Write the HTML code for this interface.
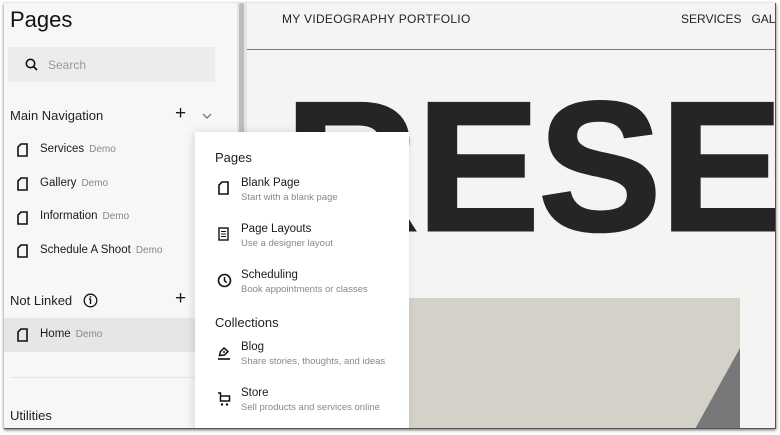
<!DOCTYPE html>
<html><head><meta charset="utf-8"><style>
*{box-sizing:border-box;margin:0;padding:0}
body{width:780px;height:435px;background:#fff;font-family:"Liberation Sans",Arial,sans-serif;position:relative;overflow:hidden;color:#1a1a1a}
.frame{position:absolute;left:4px;top:3px;width:772px;height:426px;overflow:hidden;background:#f4f4f2;box-shadow:0 1px 3px rgba(0,0,0,.6);border-right:1px solid #555;border-bottom:1px solid #555}
.side{position:absolute;left:0;top:0;width:233px;height:426px;background:#f7f7f7}
.scroll{position:absolute;left:233px;top:0;width:10px;height:426px;background:#e4e4e4}
.scroll i{position:absolute;left:2px;top:0;width:5px;height:426px;background:#bdbdbd;border-radius:2px}
.main{position:absolute;left:243px;top:0;right:0;height:426px;background:#f4f4f2}
.t{position:absolute;white-space:nowrap}
.demo{color:#888;font-size:10px;margin-left:5px}
.pi{position:absolute;width:11px;height:14px}
.pop{position:absolute;left:191px;top:129px;width:214px;height:300px;background:#fff;box-shadow:-2px 0 8px rgba(0,0,0,.12)}
.h{font-size:13px;color:#222}
.sub{font-size:9.5px;color:#888}
</style></head><body>
<div class="frame">
 <div class="side">
  <div class="t" style="left:6px;top:4px;font-size:22px;font-weight:500;color:#111">Pages</div>
  <div style="position:absolute;left:4px;top:44px;width:207px;height:35px;background:#ececec"></div>
  <svg class="t" style="left:21px;top:55px" width="13" height="13" viewBox="0 0 13 13"><circle cx="5.5" cy="5.5" r="4.2" fill="none" stroke="#111" stroke-width="1.6"/><path d="M8.6 8.6L12 12" stroke="#111" stroke-width="1.7"/></svg>
  <div class="t" style="left:44px;top:55px;font-size:12px;color:#999">Search</div>
  <div class="t" style="left:6px;top:105px;font-size:13px;color:#222">Main Navigation</div>
  <div class="t" style="left:171px;top:100px;font-size:19px;font-weight:300">+</div>
  <svg class="t" style="left:198px;top:110px" width="10" height="6"><path d="M1 1l4 4 4-4" fill="none" stroke="#666" stroke-width="1.2"/></svg>
  <div class="t" style="left:36px;top:140px;font-size:11.5px">Services<span class="demo">Demo</span></div>
  <div class="t" style="left:36px;top:174px;font-size:11.5px">Gallery<span class="demo">Demo</span></div>
  <div class="t" style="left:36px;top:207px;font-size:11.5px">Information<span class="demo">Demo</span></div>
  <div class="t" style="left:36px;top:241px;font-size:11.5px">Schedule A Shoot<span class="demo">Demo</span></div>
  <svg class="pi" style="left:13px;top:140px" viewBox="0 0 11 14"><path d="M4 1H10V13H1V4Z" fill="none" stroke="#111" stroke-width="1.6"/></svg>
  <svg class="pi" style="left:13px;top:174px" viewBox="0 0 11 14"><path d="M4 1H10V13H1V4Z" fill="none" stroke="#111" stroke-width="1.6"/></svg>
  <svg class="pi" style="left:13px;top:208px" viewBox="0 0 11 14"><path d="M4 1H10V13H1V4Z" fill="none" stroke="#111" stroke-width="1.6"/></svg>
  <svg class="pi" style="left:13px;top:241px" viewBox="0 0 11 14"><path d="M4 1H10V13H1V4Z" fill="none" stroke="#111" stroke-width="1.6"/></svg>
  <div class="t" style="left:6px;top:290px;font-size:13px;color:#222">Not Linked</div>
  <svg class="t" style="left:79px;top:290px" width="15" height="15"><circle cx="7.5" cy="7.5" r="6.3" fill="none" stroke="#111" stroke-width="1.3"/><path d="M7.5 6v5M6 6h1.5" stroke="#111" stroke-width="1.4"/><circle cx="7.5" cy="4" r=".9" fill="#111"/></svg>
  <div class="t" style="left:171px;top:285px;font-size:19px;font-weight:300">+</div>
  <div style="position:absolute;left:0;top:315px;width:233px;height:34px;background:#e6e6e6"></div>
  <svg class="pi" style="left:13px;top:325px" viewBox="0 0 11 14"><path d="M4 1H10V13H1V4Z" fill="none" stroke="#111" stroke-width="1.6"/></svg>
  <div class="t" style="left:36px;top:325px;font-size:11.5px">Home<span class="demo">Demo</span></div>
  <div style="position:absolute;left:6px;top:374px;width:227px;height:1px;background:#e5e5e5"></div>
  <div class="t" style="left:6px;top:405px;font-size:13px;color:#222">Utilities</div>
 </div>
 <div class="scroll"><i></i></div>
 <div class="main">
  <div class="t" style="left:35px;top:9px;font-size:12px;letter-spacing:.3px;color:#222">MY VIDEOGRAPHY PORTFOLIO</div>
  <div class="t" style="left:434px;top:9px;font-size:12px;color:#222">SERVICES&nbsp;&nbsp;&nbsp;GALL</div>
  <div style="position:absolute;left:0;top:46px;width:100%;height:1px;background:#777"></div>
  <div class="t" style="left:38px;top:71px;font-size:184px;font-weight:bold;color:#252527;letter-spacing:-1px;line-height:1;-webkit-text-stroke:3px #252527">RESE</div>
  <div style="position:absolute;left:158px;top:295px;width:335px;height:140px;background:#d4d1c9"></div>
  <svg class="t" style="left:158px;top:295px" width="335" height="140"><path d="M335 50L335 140L285 140Z" fill="#77787a"/></svg>
 </div>
 <div class="pop">
  <div class="t h" style="left:20px;top:18px">Pages</div>
  <svg class="pi" style="left:23px;top:49px" viewBox="0 0 11 14"><path d="M4 1H10V13H1V4Z" fill="none" stroke="#111" stroke-width="1.6"/></svg>
  <div class="t" style="left:46px;top:45px;font-size:11.5px">Blank Page</div>
  <div class="t sub" style="left:46px;top:60px">Start with a blank page</div>
  <svg class="t" style="left:23px;top:95px" width="11" height="14"><rect x="1" y="1" width="9" height="12" fill="none" stroke="#111" stroke-width="1.4"/><path d="M3 4.5h5M3 7h5M3 9.5h5" stroke="#111" stroke-width="1.1"/></svg>
  <div class="t" style="left:46px;top:91px;font-size:11.5px">Page Layouts</div>
  <div class="t sub" style="left:46px;top:106px">Use a designer layout</div>
  <svg class="t" style="left:22px;top:141px" width="15" height="15"><circle cx="7.5" cy="7.5" r="6" fill="none" stroke="#111" stroke-width="1.6"/><path d="M7.5 4v3.7l2.3 2" fill="none" stroke="#111" stroke-width="1.5"/></svg>
  <div class="t" style="left:46px;top:137px;font-size:11.5px">Scheduling</div>
  <div class="t sub" style="left:46px;top:152px">Book appointments or classes</div>
  <div class="t h" style="left:20px;top:183px">Collections</div>
  <svg class="t" style="left:22px;top:213px" width="15" height="16"><path d="M2.5 10.5L3.5 6.5L7 3L11 6.5L7.5 10Z" fill="none" stroke="#111" stroke-width="1.5"/><circle cx="7" cy="7" r="1" fill="#111"/><path d="M1 14h12" stroke="#111" stroke-width="1.6"/></svg>
  <div class="t" style="left:46px;top:209px;font-size:11.5px">Blog</div>
  <div class="t sub" style="left:46px;top:224px">Share stories, thoughts, and ideas</div>
  <svg class="t" style="left:22px;top:259px" width="15" height="16"><path d="M1 2h2.5v8h9V5H4" fill="none" stroke="#111" stroke-width="1.5"/><circle cx="5" cy="13.5" r="1.2" fill="#111"/><circle cx="10" cy="13.5" r="1.2" fill="#111"/></svg>
  <div class="t" style="left:46px;top:255px;font-size:11.5px">Store</div>
  <div class="t sub" style="left:46px;top:270px">Sell products and services online</div>
 </div>
</div>
</body></html>
